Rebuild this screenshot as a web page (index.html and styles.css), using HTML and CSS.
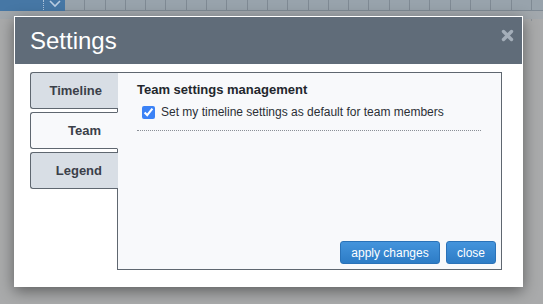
FILE: index.html
```html
<!DOCTYPE html>
<html>
<head>
<meta charset="utf-8">
<link rel="stylesheet" href="styles.css">
</head>
<body>
<div class="app">
  <div class="toolbar">
    <div class="picker">
      <span class="picker-sep"></span>
      <svg class="chev" width="14" height="8" viewBox="0 0 14 8"><path d="M2 1 L7 6 L12 1" fill="none" stroke="#b9cde2" stroke-width="1.6"/></svg>
    </div>
    <div class="grid-row"></div>
  </div>
  <div class="grid-area"></div>
</div>
<div class="dialog">
  <div class="dialog-header">
    <span class="dialog-title">Settings</span>
    <svg class="close-x" width="13" height="13" viewBox="0 0 13 13"><path d="M2.5 2.5 L10.5 10.5 M10.5 2.5 L2.5 10.5" stroke="#a4aeb9" stroke-width="3.4" stroke-linecap="round"/></svg>
  </div>
  <div class="dialog-body">
    <div class="tabs">
      <div class="tab">Timeline</div>
      <div class="tab active">Team</div>
      <div class="tab">Legend</div>
    </div>
    <div class="panel">
      <div class="panel-content">
        <h3 class="section-title">Team settings management</h3>
        <label class="check-row"><input type="checkbox" checked class="check"> Set my timeline settings as default for team members</label>
        <div class="dotted"></div>
      </div>
      <div class="actions">
        <button class="btn btn-apply">apply changes</button>
        <button class="btn btn-close">close</button>
      </div>
    </div>
  </div>
</div>
</body>
</html>
```
FILE: styles.css
```css
html, body {
  margin: 0;
  padding: 0;
  width: 543px;
  height: 304px;
  overflow: hidden;
  font-family: "Liberation Sans", Arial, sans-serif;
  background: #a9aaab;
}
.app {
  width: 543px;
  height: 304px;
  display: flex;
  flex-direction: column;
}
.toolbar {
  display: flex;
  height: 11px;
  background: #98a3ac;
}
.picker {
  width: 65px;
  height: 11px;
  background: #4677a5;
  position: relative;
}
.picker-sep {
  position: absolute;
  left: 43px;
  top: 0;
  height: 10px;
  border-left: 1px dotted #a9c0d8;
}
.chev {
  position: absolute;
  left: 48px;
  top: 0;
}
.grid-row {
  flex: 1;
  background-image: repeating-linear-gradient(90deg, transparent 0, transparent 19.3px, #7f8a94 19.3px, #7f8a94 20.3px);
  border-bottom: 1px solid #7f8a94;
}
.grid-area {
  flex: 1;
  background-color: #a9aaab;
  background-image: linear-gradient(#a2a8ad 0, #a2a8ad 8px, transparent 8px), repeating-linear-gradient(90deg, transparent 0, transparent 19.3px, #8d949a 19.3px, #8d949a 20.3px);
  background-size: 100% 100%, 100% 10px;
  background-repeat: no-repeat;
  background-position: 0 0, 65px 0;
}
.dialog {
  position: absolute;
  left: 14px;
  top: 16px;
  width: 507px;
  height: 269px;
  border: 1px solid #ffffff;
  background: #ffffff;
  display: flex;
  flex-direction: column;
  box-shadow: 0 4px 14px rgba(0, 0, 0, 0.45);
}
.dialog-header {
  height: 47px;
  background: #606c79;
  display: flex;
  align-items: center;
  padding: 0 8px 0 15px;
  position: relative;
}
.dialog-title {
  color: #ffffff;
  font-size: 24px;
  line-height: 28px;
}
.close-x {
  position: absolute;
  right: 8px;
  top: 12px;
}
.dialog-body {
  flex: 1;
  display: flex;
  padding: 8px 20px 16px 15px;
}
.tabs {
  width: 88px;
  display: flex;
  flex-direction: column;
  gap: 3px;
  margin-right: -1px;
  position: relative;
  z-index: 1;
}
.tab {
  height: 35px;
  border: 1px solid #5f6770;
  border-right: none;
  border-radius: 3px 0 0 3px;
  background: #d8dee5;
  color: #3b4049;
  font-weight: bold;
  font-size: 13px;
  display: flex;
  align-items: center;
  justify-content: flex-end;
  padding-right: 16px;
}
.tab.active {
  background: #f8f9fb;
  border-right: 1px solid #f8f9fb;
}
.panel {
  flex: 1;
  border: 1px solid #5f6770;
  background: #f8f9fb;
  display: flex;
  flex-direction: column;
  justify-content: space-between;
}
.panel-content {
  padding: 9px 20px 0 19px;
}
.section-title {
  margin: 0;
  font-size: 13px;
  line-height: 16px;
  font-weight: bold;
  color: #23272d;
}
.check-row {
  display: flex;
  align-items: center;
  margin-top: 6px;
  padding-left: 5px;
  font-size: 12px;
  color: #2b2f35;
  line-height: 16px;
}
.check {
  width: 13px;
  height: 13px;
  margin: 0 6px 0 0;
  accent-color: #3b82f6;
}
.dotted {
  margin-top: 10px;
  border-top: 1px dotted #8a8f96;
}
.actions {
  display: flex;
  justify-content: flex-end;
  gap: 6px;
  padding: 0 5px 5px 0;
}
.btn {
  height: 23px;
  border: 1px solid #2a72b8;
  border-radius: 3px;
  background: linear-gradient(#4494dc, #2d7cc6);
  color: #ffffff;
  font-family: "Liberation Sans", Arial, sans-serif;
  font-size: 12px;
  padding: 0;
  white-space: nowrap;
}
.btn-apply {
  width: 100px;
}
.btn-close {
  width: 50px;
}
```
